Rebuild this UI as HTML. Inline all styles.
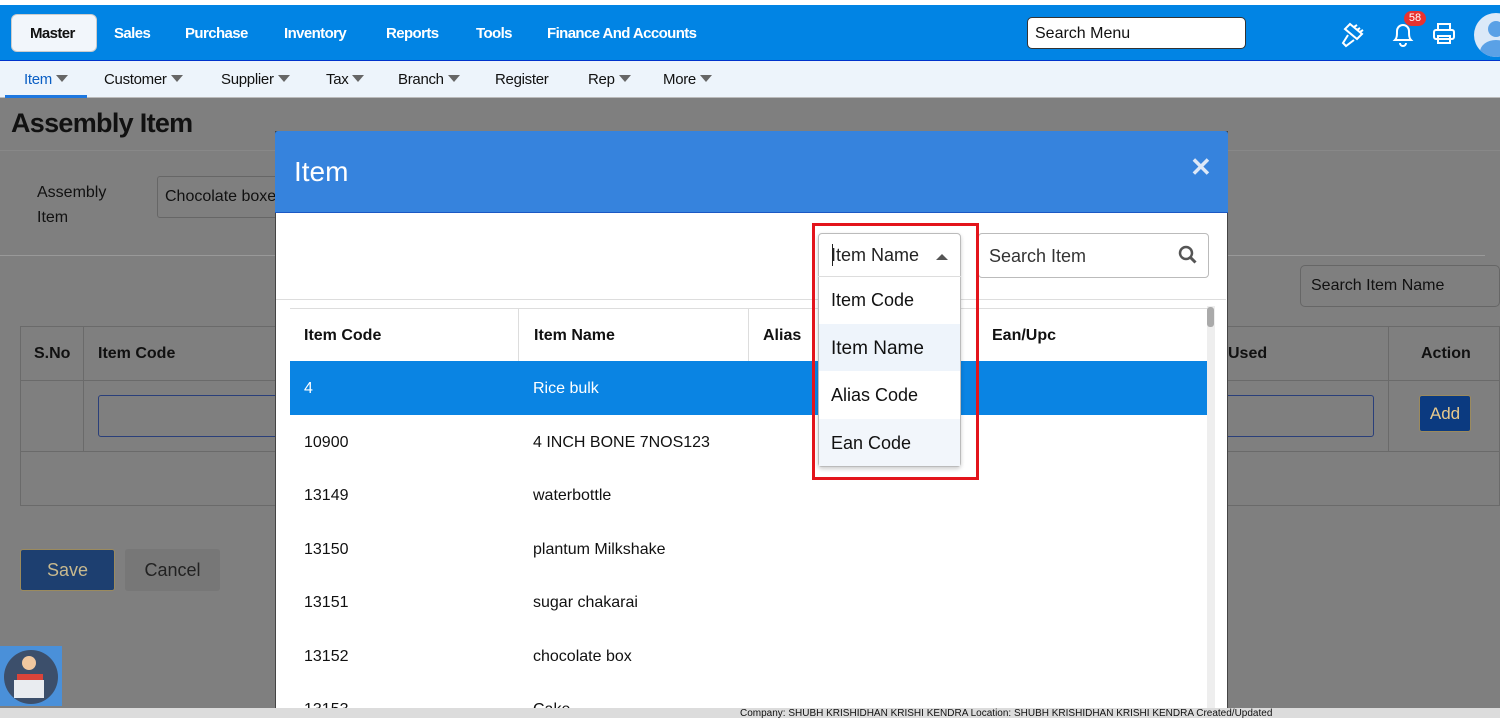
<!DOCTYPE html>
<html style="width:1500px;height:718px;overflow:hidden;background:#7f7f7f"><head><meta charset="utf-8"><style>
*{box-sizing:border-box;margin:0;padding:0}
body{width:1500px;height:718px;overflow:hidden;font-family:"Liberation Sans",sans-serif;background:#7f7f7f;position:relative;font-size:16px;color:#111}
.a{position:absolute}
.top{left:0;top:5px;width:1500px;height:56px;background:#0184e4;border-bottom:1px solid #0033cc}
.top span{position:absolute;top:20px;color:#fff;font-weight:bold;font-size:15px;letter-spacing:-0.6px}
.sub{left:0;top:61px;width:1500px;height:37px;background:#edf4fb;border-bottom:1px solid #bbb}
.sub span{position:absolute;top:10px;font-size:15px;color:#111;letter-spacing:-0.3px}
.tri{display:inline-block;width:0;height:0;border-left:6px solid transparent;border-right:6px solid transparent;border-top:7px solid #666;margin-left:4px;vertical-align:2px}
.row{position:absolute;left:290px;width:917px;height:54px;font-size:16px}
.row span{position:absolute;top:19px}
</style></head><body>
<div class="a" style="left:0;top:0;width:1500px;height:5px;background:#fff"></div>
<div class="a top">
<div class="a" style="left:11px;top:9px;width:86px;height:38px;background:#f2f6fb;border-radius:6px;border:1px solid #ccc"></div>
<span style="left:30px;color:#111">Master</span>
<span style="left:114px">Sales</span><span style="left:185px">Purchase</span><span style="left:284px">Inventory</span><span style="left:386px">Reports</span><span style="left:476px">Tools</span><span style="left:547px">Finance And Accounts</span>
<div class="a" style="left:1027px;top:12px;width:219px;height:32px;background:#fff;border:1px solid #333;border-radius:5px;font-size:16px;padding:7px 7px">Search Menu</div>
<svg class="a" style="left:1340px;top:15px" width="28" height="30" viewBox="0 0 28 30"><g fill="none" stroke="#fff" stroke-width="2"><path d="M10 4l12 10-5 5-12-10z"/><path d="M8 15l-5 8 3 3 8-6"/><path d="M14 7l3-2M17 10l3-2M20 12l3-2"/></g></svg>
<svg class="a" style="left:1390px;top:14px" width="26" height="30" viewBox="0 0 26 30"><path d="M5 21c2-2 2-5 2-9a6 6 0 0112 0c0 4 0 7 2 9z M10 24a3 3 0 006 0" fill="none" stroke="#fff" stroke-width="2"/></svg>
<div class="a" style="left:1404px;top:6px;width:22px;height:15px;background:#e8322f;border-radius:8px;color:#fff;font-size:11px;text-align:center;line-height:15px">58</div>
<svg class="a" style="left:1432px;top:17px" width="24" height="24" viewBox="0 0 24 24"><g fill="none" stroke="#fff" stroke-width="2"><rect x="6" y="2" width="12" height="6"/><rect x="2" y="8" width="20" height="9" rx="2"/><rect x="6" y="14" width="12" height="7"/></g></svg>
<div class="a" style="left:1474px;top:8px;width:44px;height:44px;border-radius:50%;background:#dbe9f8;overflow:hidden"><div class="a" style="left:14px;top:8px;width:16px;height:16px;border-radius:50%;background:#5aa1e6"></div><div class="a" style="left:6px;top:27px;width:32px;height:24px;border-radius:50%;background:#5aa1e6"></div></div>
</div>
<div class="a sub">
<span style="left:24px;color:#0b5fc4">Item<i class="tri"></i></span>
<div class="a" style="left:5px;top:34px;width:82px;height:3px;background:#1e78e0"></div>
<span style="left:104px">Customer<i class="tri"></i></span><span style="left:221px">Supplier<i class="tri"></i></span><span style="left:326px">Tax<i class="tri"></i></span><span style="left:398px">Branch<i class="tri"></i></span><span style="left:495px">Register</span><span style="left:588px">Rep<i class="tri"></i></span><span style="left:663px">More<i class="tri"></i></span>
</div>
<div class="a" style="left:11px;top:108px;font-size:27px;font-weight:bold;color:#111;letter-spacing:-0.7px">Assembly Item</div>
<div class="a" style="left:0;top:150px;width:1500px;height:1px;background:#888"></div>
<div class="a" style="left:37px;top:180px;font-size:16px;line-height:25px">Assembly<br>Item</div>
<div class="a" style="left:157px;top:176px;width:130px;height:42px;border:1px solid #666;border-radius:3px;padding:11px 7px;font-size:16px">Chocolate boxe</div>
<div class="a" style="left:0;top:255px;width:1485px;height:1px;background:#999"></div>
<div class="a" style="left:1300px;top:265px;width:200px;height:42px;border:1px solid #666;border-radius:5px;padding:11px 10px;font-size:16px">Search Item Name</div>
<div class="a" style="left:20px;top:326px;width:1480px;height:180px;border:1px solid #6a6a6a"></div>
<div class="a" style="left:20px;top:380px;width:1480px;height:1px;background:#6a6a6a"></div>
<div class="a" style="left:20px;top:451px;width:1480px;height:1px;background:#6a6a6a"></div>
<div class="a" style="left:83px;top:326px;width:1px;height:125px;background:#6a6a6a"></div>
<div class="a" style="left:1388px;top:326px;width:1px;height:125px;background:#6a6a6a"></div>
<div class="a" style="left:34px;top:345px;font-weight:bold">S.No</div>
<div class="a" style="left:98px;top:345px;font-weight:bold">Item Code</div>
<div class="a" style="left:1228px;top:345px;font-weight:bold">Used</div>
<div class="a" style="left:1421px;top:345px;font-weight:bold">Action</div>
<div class="a" style="left:98px;top:395px;width:1276px;height:42px;border:1px solid #2a3f7a;border-radius:3px"></div>
<div class="a" style="left:1419px;top:395px;width:52px;height:37px;background:#0b3a80;border:1px solid #9b8a5d;border-radius:3px;color:#e8c98c;font-size:17px;text-align:center;line-height:35px">Add</div>
<div class="a" style="left:20px;top:549px;width:95px;height:42px;background:#1d3f70;border:1px solid #9b8a5d;border-radius:3px;color:#c8b98e;font-size:18px;text-align:center;line-height:40px">Save</div>
<div class="a" style="left:125px;top:549px;width:95px;height:42px;background:#777;border-radius:3px;color:#222;font-size:18px;text-align:center;line-height:42px">Cancel</div>
<div class="a" style="left:0;top:646px;width:62px;height:60px;background:#4a90d9"><div class="a" style="left:4px;top:4px;width:54px;height:54px;border-radius:50%;background:#3c4f6b"></div><div class="a" style="left:17px;top:28px;width:26px;height:14px;background:#d9443a"></div><div class="a" style="left:14px;top:34px;width:30px;height:18px;background:#e9ecf0"></div><div class="a" style="left:22px;top:10px;width:14px;height:14px;border-radius:50%;background:#f0c8a0"></div></div>
<div class="a" style="left:0;top:708px;width:1500px;height:10px;background:#dcdcdc"></div>
<div class="a" style="left:275px;top:131px;width:953px;height:587px;background:#fff;border:1px solid #444"></div>
<div class="a" style="left:275px;top:131px;width:953px;height:82px;background:#3683dd;border-bottom:1px solid #1b58c4;border-radius:3px 3px 0 0"></div>
<div class="a" style="left:294px;top:156px;font-size:28px;color:#fff">Item</div>
<div class="a" style="left:1190px;top:152px;font-size:26px;color:#dde8f7;font-weight:bold">✕</div>
<div class="a" style="left:978px;top:233px;width:231px;height:45px;border:1px solid #bbb;border-radius:4px;padding:12px 10px;font-size:18px;color:#333">Search Item</div>
<svg class="a" style="left:1178px;top:245px" width="20" height="20" viewBox="0 0 20 20"><circle cx="8" cy="8" r="6" fill="none" stroke="#555" stroke-width="2.5"/><path d="M12.5 12.5l5 5" stroke="#555" stroke-width="3"/></svg>
<div class="a" style="left:276px;top:299px;width:950px;height:1px;background:#ddd"></div>
<div class="a" style="left:290px;top:308px;width:917px;height:53px;border-top:1px solid #ddd"></div>
<div class="a" style="left:518px;top:308px;width:1px;height:53px;background:#ddd"></div>
<div class="a" style="left:748px;top:308px;width:1px;height:53px;background:#ddd"></div>
<div class="a" style="left:1207px;top:306px;width:8px;height:412px;background:#eee"></div>
<div class="a" style="left:1207px;top:307px;width:7px;height:20px;background:#aaa;border-radius:3px"></div>
<div class="row" style="top:308px;font-weight:bold"><span style="left:14px">Item Code</span><span style="left:244px">Item Name</span><span style="left:473px">Alias</span><span style="left:702px">Ean/Upc</span></div>
<div class="row" style="top:361px;background:#0a84e3;color:#fff"><span style="left:14px">4</span><span style="left:243px">Rice bulk</span></div>
<div class="row" style="top:415px"><span style="left:14px">10900</span><span style="left:243px">4 INCH BONE 7NOS123</span></div>
<div class="row" style="top:468px"><span style="left:14px">13149</span><span style="left:243px">waterbottle</span></div>
<div class="row" style="top:522px"><span style="left:14px">13150</span><span style="left:243px">plantum Milkshake</span></div>
<div class="row" style="top:575px"><span style="left:14px">13151</span><span style="left:243px">sugar chakarai</span></div>
<div class="row" style="top:629px"><span style="left:14px">13152</span><span style="left:243px">chocolate box</span></div>
<div class="row" style="top:682px"><span style="left:14px">13153</span><span style="left:243px">Cake</span></div>
<div class="a" style="left:0;top:708px;width:1500px;height:10px;background:#dcdcdc"></div>
<div class="a" style="left:740px;top:709px;font-size:10px;line-height:10px;color:#111;white-space:nowrap">Company: SHUBH KRISHIDHAN KRISHI KENDRA  Location: SHUBH KRISHIDHAN KRISHI KENDRA  Created/Updated</div>
<div class="a" style="left:818px;top:233px;width:143px;height:234px;background:#fff;border:1px solid #bbb;border-radius:4px;box-shadow:0 2px 4px rgba(0,0,0,.2)"></div>
<div class="a" style="left:818px;top:276px;width:143px;height:1px;background:#ddd"></div>
<div class="a" style="left:831px;top:245px;font-size:18px;color:#222">Item Name</div>
<div class="a" style="left:832px;top:244px;width:1px;height:22px;background:#222"></div>
<div class="a" style="left:936px;top:254px;border-left:6px solid transparent;border-right:6px solid transparent;border-bottom:6px solid #555"></div>
<div class="a" style="left:831px;top:290px;font-size:18px">Item Code</div>
<div class="a" style="left:819px;top:324px;width:141px;height:47px;background:#eef4fb"></div>
<div class="a" style="left:831px;top:338px;font-size:19px;color:#111">Item Name</div>
<div class="a" style="left:831px;top:385px;font-size:18px">Alias Code</div>
<div class="a" style="left:819px;top:419px;width:141px;height:47px;background:#f2f6fb"></div>
<div class="a" style="left:831px;top:433px;font-size:18px">Ean Code</div>
<div class="a" style="left:812px;top:223px;width:167px;height:257px;border:3px solid #e3141b"></div>
</body></html>
